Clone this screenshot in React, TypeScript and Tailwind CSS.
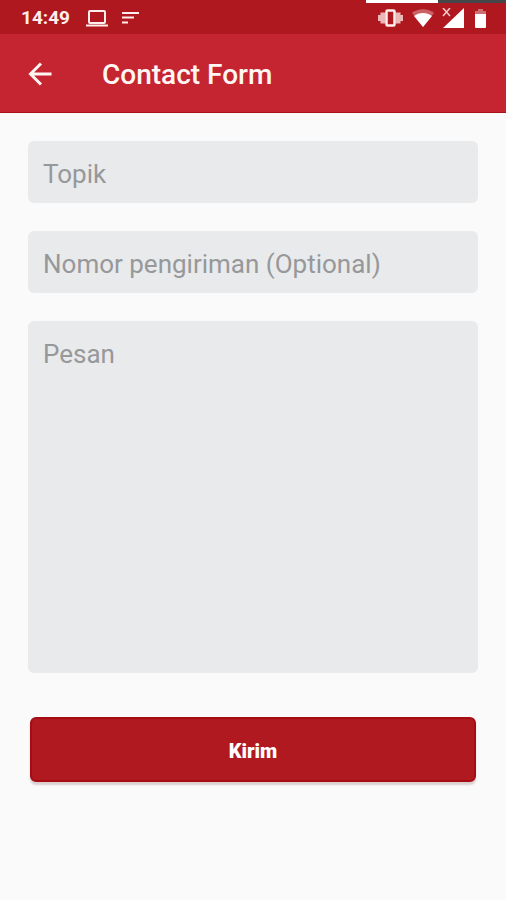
import { useState } from "react";
import type { FormEvent } from "react";
import { clsx } from "clsx";

const FIELD_CLASSES =
  "block w-full rounded-md bg-[#e9eaec] px-[15px] pt-[18px] pb-[14px] text-[26px] leading-[30px] text-[#333] outline-none placeholder:text-[#96989a] placeholder:opacity-100";

export default function App() {
  return (
    <div className="min-h-screen bg-[#fafafa] font-['Roboto',sans-serif]">
      <StatusBar />
      <AppBar title="Contact Form" />
      <ContactForm />
    </div>
  );
}

function StatusBar() {
  return (
    <div className="relative flex h-[34px] items-center justify-between bg-[#af181f] pt-[2px] pr-5 pl-[21px] text-[#ffeeec]">
      {/* Capture strip along the top edge */}
      <div className="absolute top-0 right-0 flex h-[3px] w-[140px]">
        <span className="w-[72px] bg-white" />
        <span className="flex-1 bg-[#45464a]" />
      </div>

      <div className="flex items-center">
        <span className="text-[19px] leading-6 font-bold">14:49</span>
        <LaptopIcon className="ml-4" />
        <SortIcon className="ml-[14px]" />
      </div>

      <div className="flex items-center">
        <VibrateIcon />
        <WifiIcon className="ml-[9px]" />
        <SignalIcon className="ml-2" />
        <BatteryIcon className="ml-[10px]" />
      </div>
    </div>
  );
}

function AppBar({ title }: { title: string }) {
  return (
    <header className="flex h-[79px] items-center border-b border-[#a9121a] bg-[#c42530] pt-[2px] pl-6 text-[#fff5f3]">
      <button type="button" aria-label="Kembali" className="flex size-8 items-center justify-center">
        <BackIcon />
      </button>
      <h1 className="ml-[46px] pt-[2px] text-[28px] leading-8 font-medium">{title}</h1>
    </header>
  );
}

function ContactForm() {
  const [topic, setTopic] = useState("");
  const [shipment, setShipment] = useState("");
  const [message, setMessage] = useState("");

  function handleSubmit(e: FormEvent) {
    e.preventDefault();
  }

  return (
    <form onSubmit={handleSubmit} className="flex flex-col gap-7 p-7">
      <input
        type="text"
        aria-label="Topik"
        placeholder="Topik"
        value={topic}
        onChange={(e) => setTopic(e.target.value)}
        className={FIELD_CLASSES}
      />
      <input
        type="text"
        aria-label="Nomor pengiriman (Optional)"
        placeholder="Nomor pengiriman (Optional)"
        value={shipment}
        onChange={(e) => setShipment(e.target.value)}
        className={FIELD_CLASSES}
      />
      <textarea
        aria-label="Pesan"
        placeholder="Pesan"
        value={message}
        onChange={(e) => setMessage(e.target.value)}
        className={clsx(FIELD_CLASSES, "h-[352px] resize-none")}
      />
      <div className="px-[2px] pt-4">
        <button
          type="submit"
          className="h-[65px] w-full rounded-md border-2 border-[#a60c13] bg-[#af191f] pt-[2px] text-xl leading-6 font-black text-white shadow-[0_3px_2px_rgba(90,40,40,0.2)]"
        >
          Kirim
        </button>
      </div>
    </form>
  );
}

interface IconProps {
  className?: string;
}

function LaptopIcon({ className }: IconProps) {
  return (
    <svg className={className} width="22" height="17" viewBox="0 0 22 17" fill="none" aria-hidden="true">
      <rect x="3" y="1" width="16" height="12" rx="1" stroke="currentColor" strokeWidth="2" />
      <path d="M0 15.500h22" stroke="currentColor" strokeWidth="2" />
    </svg>
  );
}

function SortIcon({ className }: IconProps) {
  return (
    <svg className={className} width="17" height="12" viewBox="0 0 17 12" aria-hidden="true">
      <path d="M0 1h17M0 5.500h12M0 10.500h6" stroke="currentColor" strokeWidth="2" />
    </svg>
  );
}

function BackIcon() {
  return (
    <svg width="24" height="24" viewBox="0 0 24 24" fill="none" aria-hidden="true">
      <path d="M13 1.5 2.5 12 13 22.5M2.5 12h21" stroke="currentColor" strokeWidth="3" />
    </svg>
  );
}

function VibrateIcon({ className }: IconProps) {
  return (
    <svg className={className} width="25" height="18" viewBox="0 0 25 18" fill="none" aria-hidden="true">
      <path d="M0 6h3v6H0zM22 6h3v6h-3zM2.500 3.500h5v11h-5zM17.500 3.500h5v11h-5z" fill="currentColor" opacity="0.75" />
      <rect x="8.500" y="1.500" width="8" height="15" rx="1" stroke="currentColor" strokeWidth="2.500" />
    </svg>
  );
}

function WifiIcon({ className }: IconProps) {
  return (
    <svg className={className} width="22" height="18" viewBox="0 0 22 18" aria-hidden="true">
      <path d="M11 18 0 4C6-1 16-1 22 4z" fill="currentColor" opacity="0.35" />
      <path d="M11 18 2 7C7 3 15 3 20 7z" fill="#fff" />
    </svg>
  );
}

function SignalIcon({ className }: IconProps) {
  return (
    <svg className={className} width="23" height="20" viewBox="0 0 23 20" aria-hidden="true">
      <path d="M22 0v20H1z" fill="#fff" />
      <path d="m1 0 7 8M8 0 1 8" stroke="currentColor" strokeWidth="1.500" opacity="0.85" />
    </svg>
  );
}

function BatteryIcon({ className }: IconProps) {
  return (
    <svg className={className} width="11" height="19" viewBox="0 0 11 19" aria-hidden="true">
      <path d="M3 0h5v2h3v4H0V2h3z" fill="currentColor" opacity="0.4" />
      <path d="M0 5h11v13a1 1 0 0 1-1 1H1a1 1 0 0 1-1-1z" fill="#fff" />
    </svg>
  );
}
